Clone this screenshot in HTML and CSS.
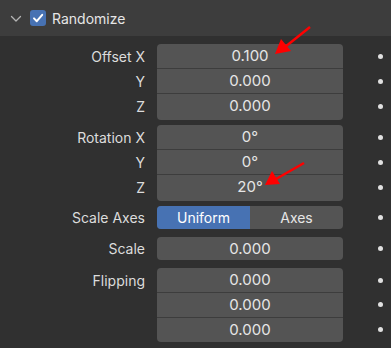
FILE: index.html
```html
<!DOCTYPE html>
<html lang="en">
<head>
    <meta charset="UTF-8">
    <title>Randomize</title>
    <link rel="stylesheet" href="styles.css">
</head>
<body>
    <div class="panelHeader">
        <svg class="chevron" width="12" height="8" viewBox="0 0 12 8"><path d="M1.5 1.5 L6 6 L10.5 1.5" fill="none" stroke="#b4b4b4" stroke-width="1.3" stroke-linecap="round" stroke-linejoin="round"/></svg>
        <span class="check">
            <svg width="16" height="16" viewBox="0 0 16 16"><path d="M4 8.4 L6.8 11.2 L12.2 4.8" fill="none" stroke="#fff" stroke-width="2" stroke-linecap="round" stroke-linejoin="round"/></svg>
        </span>
        <span class="title">Randomize</span>
    </div>

    <div class="props">
        <div class="group g-offset">
            <div class="row first"><span class="label">Offset X</span><span class="field">0.100</span><span class="dot"></span></div>
            <div class="row"><span class="label">Y</span><span class="field">0.000</span><span class="dot"></span></div>
            <div class="row last"><span class="label">Z</span><span class="field">0.000</span><span class="dot"></span></div>
        </div>

        <div class="group">
            <div class="row first"><span class="label">Rotation X</span><span class="field">0°</span><span class="dot"></span></div>
            <div class="row"><span class="label">Y</span><span class="field">0°</span><span class="dot"></span></div>
            <div class="row last"><span class="label">Z</span><span class="field">20°</span><span class="dot"></span></div>
        </div>

        <div class="group g-axes">
            <div class="row first last"><span class="label">Scale Axes</span>
                <span class="field toggle"><span class="opt on">Uniform</span><span class="opt">Axes</span></span>
                <span class="dot"></span></div>
        </div>

        <div class="group">
            <div class="row first last"><span class="label">Scale</span><span class="field">0.000</span><span class="dot"></span></div>
        </div>

        <div class="group">
            <div class="row first"><span class="label">Flipping</span><span class="field">0.000</span><span class="dot"></span></div>
            <div class="row"><span class="label"></span><span class="field">0.000</span><span class="dot"></span></div>
            <div class="row last"><span class="label"></span><span class="field">0.000</span><span class="dot"></span></div>
        </div>
    </div>

    <!-- red annotation arrows drawn over the panel -->
    <svg class="arrows" width="391" height="348" viewBox="0 0 391 348">
        <line x1="310" y1="27" x2="285" y2="47" stroke="#f00" stroke-width="2.5"/>
        <polygon points="275,54 281,39 291,51" fill="#f00"/>
        <line x1="304" y1="163" x2="276" y2="179" stroke="#f00" stroke-width="2.5"/>
        <polygon points="265,185 272,171 280,184" fill="#f00"/>
    </svg>
</body>
</html>
```

FILE: styles.css
```css
* {
    margin: 0;
    padding: 0;
    box-sizing: border-box;
}
body {
    background: #303030;
    font-family: Inter, "Noto Sans", sans-serif;
    font-size: 14px;
    color: #e0e0e0;
    position: relative;
    width: 391px;
    height: 348px;
    overflow: hidden;
}
.panelHeader {
    height: 36px;
    background: #3d3d3d;
    display: flex;
    align-items: center;
    padding-left: 10px;
}
.chevron {
    margin-right: 8px;
    margin-top: 1px;
}
.check {
    width: 16px;
    height: 16px;
    background: #4772b3;
    border-radius: 3px;
    display: flex;
}
.title {
    margin-left: 6px;
    font-size: 14px;
    color: #e6e6e6;
}
.props {
    padding-top: 8px;
}
.group {
    margin-bottom: 8px;
}
.g-offset {
    margin-bottom: 7px;
}
.g-axes {
    margin-top: -1px;
}
.row {
    display: grid;
    grid-template-columns: 145px 186px 1fr;
    column-gap: 12px;
    height: 24px;
}
.row + .row {
    height: 25px;
}
.label {
    text-align: right;
    line-height: 25px;
    color: #dcdcdc;
}
.row + .row .label {
    line-height: 27px;
}
.field {
    background: #545454;
    text-align: center;
    line-height: 24px;
    font-size: 15px;
    color: #e6e6e6;
}
.row + .row .field {
    border-top: 1px solid #3d3d3d;
}
.row.first .field {
    border-radius: 4px 4px 0 0;
}
.row.last .field {
    border-radius: 0 0 4px 4px;
}
.row.first.last {
    height: 23px;
}
.row.first.last .label {
    line-height: 23px;
}
.row.first.last .field {
    border-radius: 4px;
    line-height: 23px;
}
.toggle {
    display: flex;
    overflow: hidden;
    font-size: 14px;
}
.opt {
    flex: 1;
}
.opt.on {
    background: #4772b3;
    color: #fff;
}
.dot {
    justify-self: end;
    align-self: center;
    width: 5px;
    height: 5px;
    border-radius: 50%;
    background: #e0e0e0;
    margin-right: 8px;
}
.arrows {
    position: absolute;
    left: 0;
    top: 0;
}
```
